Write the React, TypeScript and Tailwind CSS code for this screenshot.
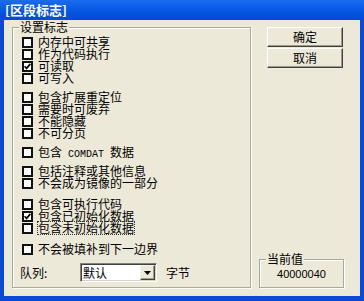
const groups: { label: React.ReactNode; checked?: boolean; focus?: boolean }[][] = [
	[
		{ label: '内存中可共享' },
		{ label: '作为代码执行' },
		{ label: '可读取', checked: true },
		{ label: '可写入' },
	],
	[
		{ label: '包含扩展重定位' },
		{ label: '需要时可废弃' },
		{ label: '不能隐藏' },
		{ label: '不可分页' },
	],
	[
		{
			label: (
				<>
					包含
					<span className="font-['Liberation_Mono',monospace] text-[10px] whitespace-pre">
						{' COMDAT '}
					</span>
					数据
				</>
			),
		},
	],
	[{ label: '包括注释或其他信息' }, { label: '不会成为镜像的一部分' }],
	[
		{ label: '包含可执行代码' },
		{ label: '包含已初始化数据', checked: true },
		{ label: '包含未初始化数据', focus: true },
	],
	[{ label: '不会被填补到下一边界' }],
];

const groupGaps = ['mt-0', 'mt-[7px]', 'mt-[7px]', 'mt-[7px]', 'mt-[9px]', 'mt-[9px]'];

function Check({ checked }: { checked?: boolean }) {
	return (
		<span className="flex h-[11px] w-[11px] shrink-0 items-center justify-center border-2 border-[#111] bg-white">
			{checked && (
				<svg width="7" height="7" viewBox="0 0 7 7">
					<path d="M0.6 3.2 L2.6 5.4 L6.4 0.9" stroke="#000" strokeWidth="1.7" fill="none" />
				</svg>
			)}
		</span>
	);
}

function Button({ children }: { children: React.ReactNode }) {
	return (
		<div className="flex h-[20px] w-[76px] items-center justify-center border border-t-white border-l-white border-b-[#404040] border-r-[#404040] bg-[#ECE9D8] shadow-[inset_-1px_-1px_0_#9d9a8c]">
			{children}
		</div>
	);
}

export default function App() {
	return (
		<div className="flex h-[301px] w-[364px] flex-col bg-[#0B4AD6] font-['Noto_Sans_CJK_SC',sans-serif] text-[12px] leading-[12px] text-black">
			<div className="flex h-[20px] items-center bg-gradient-to-b from-[#1A6CF0] via-[#0758E4] to-[#0449D6] pl-[5px] text-[13px] font-bold text-white">
				[区段标志]
			</div>
			<div className="mx-[4px] mb-[5px] flex flex-1 bg-[#ECE9D8] pl-[8px] pt-[7px]">
				<div className="relative h-[261px] w-[239px] border border-[#ACA899] shadow-[inset_1px_1px_0_#fff,1px_1px_0_#fff]">
					<span className="absolute -top-[7px] left-[6px] bg-[#ECE9D8] px-[1px]">设置标志</span>
					<div className="flex flex-col pt-[8px]">
						{groups.map((rows, gi) => (
							<div key={gi} className={`flex flex-col ${groupGaps[gi]}`}>
								{rows.map((row, ri) => (
									<div key={ri} className="flex h-[12px] items-center pl-[9px]">
										<Check checked={row.checked} />
										<span
											className={`ml-[5px] h-[12px] whitespace-nowrap leading-[12px] ${
												row.focus ? 'outline outline-1 outline-dotted outline-[#333]' : ''
											}`}
										>
											{row.label}
										</span>
									</div>
								))}
							</div>
						))}
						<div className="mt-[8px] flex h-[19px] items-center pl-[7px]">
							<span className="w-[60px]">队列:</span>
							<div className="flex h-[19px] w-[77px] items-center border border-t-[#808080] border-l-[#808080] border-b-white border-r-white bg-white shadow-[inset_1px_1px_0_#404040,inset_-1px_-1px_0_#d4d0c8]">
								<span className="flex-1 pl-[2px]">默认</span>
								<div className="mr-[1px] flex h-[15px] w-[15px] items-center justify-center border border-t-[#f4f2ea] border-l-[#f4f2ea] border-b-[#404040] border-r-[#404040] bg-[#ECE9D8] shadow-[inset_-1px_-1px_0_#9d9a8c]">
									<svg width="7" height="4" viewBox="0 0 7 4">
										<path d="M0 0 H7 L3.5 4 Z" fill="#000" />
									</svg>
								</div>
							</div>
							<span className="ml-[9px]">字节</span>
						</div>
					</div>
				</div>
				<div className="ml-[8px] flex h-[261px] w-[85px] flex-col justify-between">
					<div className="flex flex-col gap-[1px] pl-[8px]">
						<Button>确定</Button>
						<Button>取消</Button>
					</div>
					<div className="relative flex h-[29px] w-[85px] items-center justify-center border border-[#ACA899] shadow-[inset_1px_1px_0_#fff,1px_1px_0_#fff]">
						<span className="absolute -top-[7px] left-[6px] bg-[#ECE9D8] px-[1px]">当前值</span>
						<span className="pt-[2px] font-['Liberation_Sans',sans-serif] text-[11px] leading-[11px]">
							40000040
						</span>
					</div>
				</div>
			</div>
		</div>
	);
}
